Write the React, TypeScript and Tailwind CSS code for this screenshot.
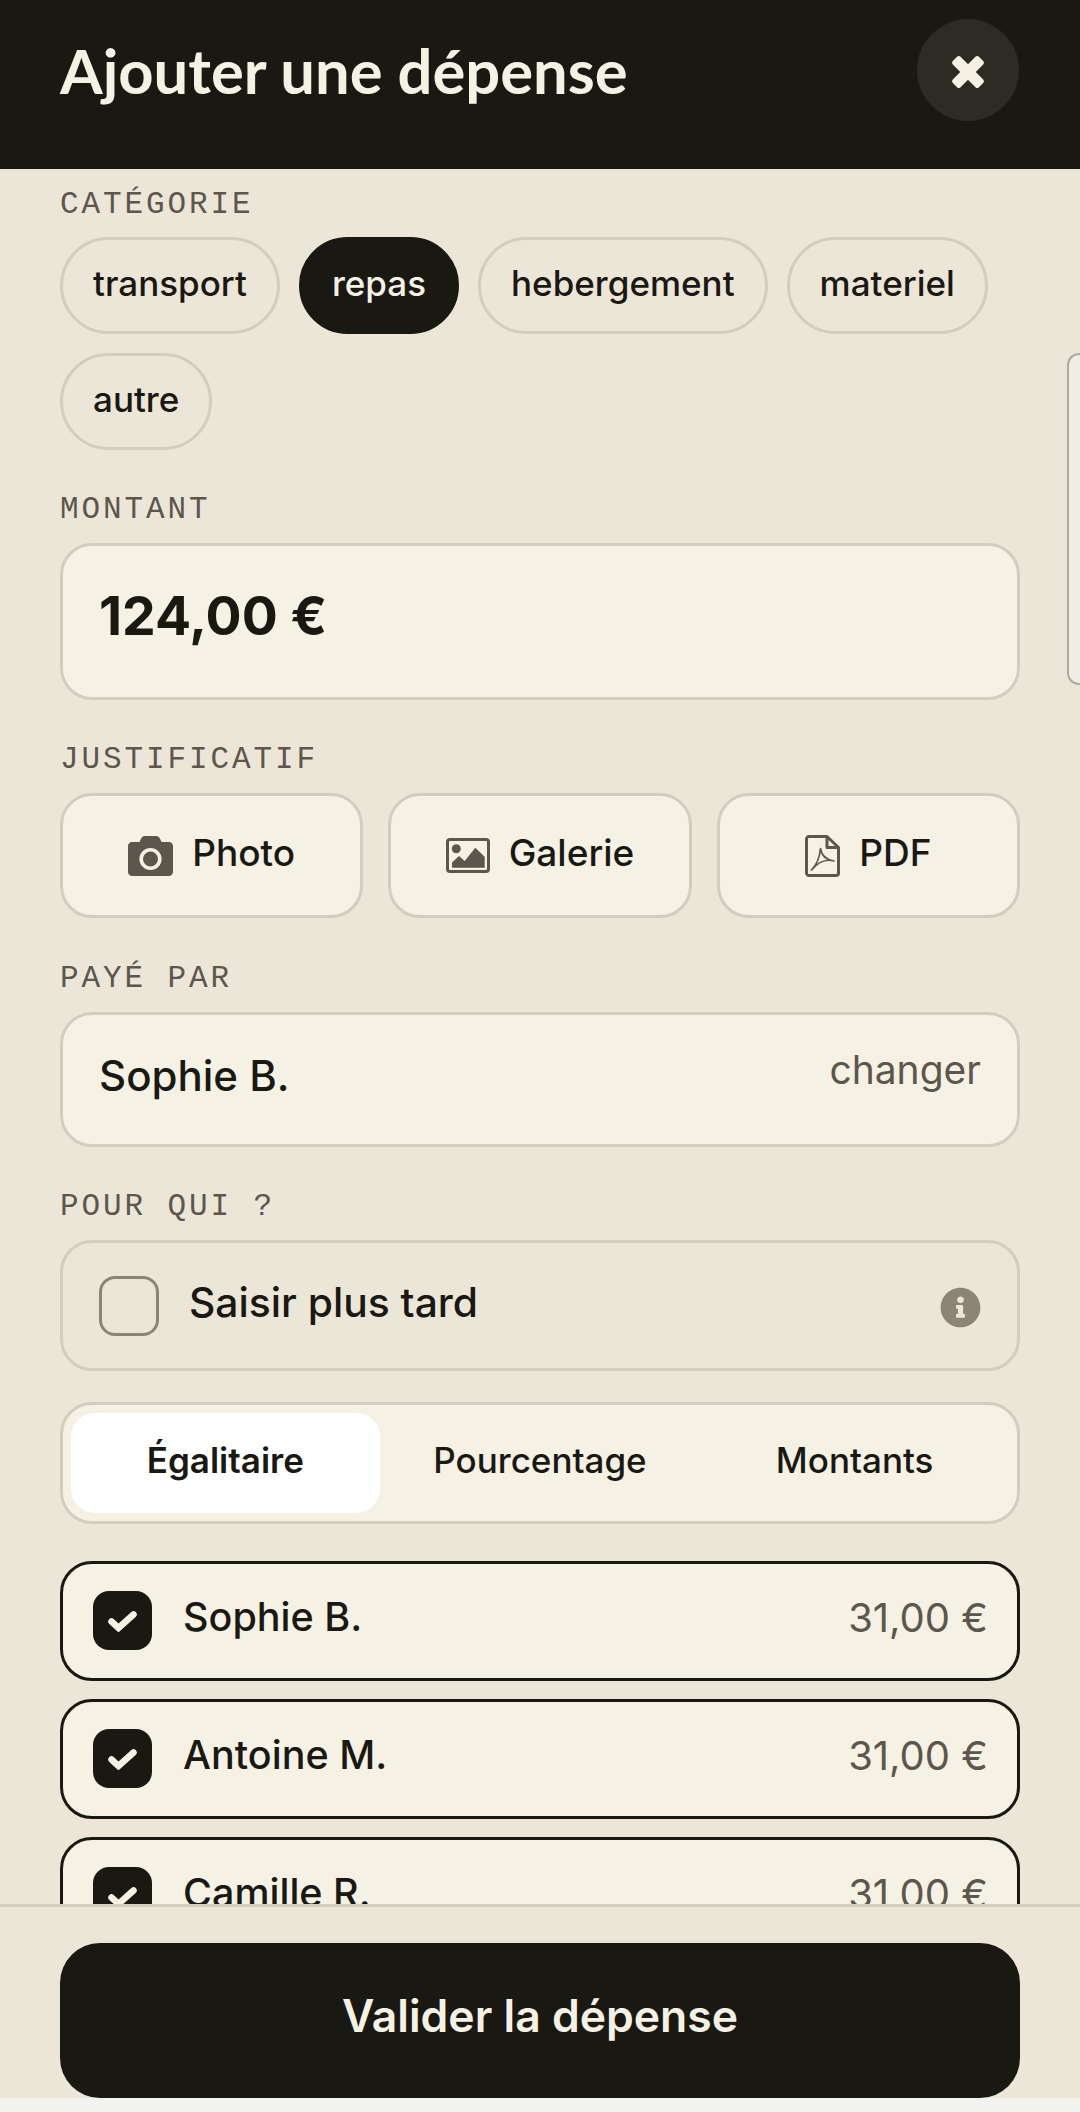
import React from "react";
import { FaInfoCircle } from "react-icons/fa";

const Label = ({ children, className = "" }: { children: React.ReactNode; className?: string }) => (
  <div className={`h-[44px] mb-[13px] pt-[3px] flex items-center whitespace-pre font-['Liberation_Mono',monospace] text-[31px] leading-[44px] tracking-[2.9px] text-[#5c564c] ${className}`}>
    {children}
  </div>
);

const chips = ["transport", "repas", "hebergement", "materiel", "autre"];
const people = ["Sophie B.", "Antoine M.", "Camille R."];

const CameraIcon = () => (
  <svg width="45" height="40" viewBox="0 0 45 40" className="block">
    <path d="M4 6h7.5l1.6-3.6C13.9 0.9 15 0 16.8 0h11.4c1.8 0 2.9 0.9 3.7 2.4L33.5 6H41c2.2 0 4 1.8 4 4v26c0 2.2-1.8 4-4 4H4c-2.2 0-4-1.8-4-4V10c0-2.2 1.8-4 4-4z" fill="#5c564c" />
    <circle cx="22.5" cy="23" r="9.3" fill="none" stroke="#f5f1e5" strokeWidth="3.6" />
  </svg>
);

const ImageIcon = () => (
  <svg width="44" height="35" viewBox="0 0 44 35" className="block">
    <rect x="1.5" y="1.5" width="41" height="32" rx="2.5" fill="none" stroke="#5c564c" strokeWidth="3" />
    <circle cx="10.3" cy="10.7" r="4.5" fill="#5c564c" />
    <path d="M6 29.7V24.5L13 18l5.7 5L29.3 9.7l9.4 9v11z" fill="#5c564c" />
  </svg>
);

const PdfIcon = () => (
  <svg width="35" height="42" viewBox="0 0 35 42" className="block" fill="none" stroke="#5c564c">
    <path d="M22 1.5H4A2.5 2.5 0 0 0 1.5 4v34A2.5 2.5 0 0 0 4 40.5h27a2.5 2.5 0 0 0 2.5-2.5V12.5z" strokeWidth="3" strokeLinejoin="round" />
    <path d="M22 1.5v11h11.5" strokeWidth="3" strokeLinejoin="round" />
    <path d="M6.5 35C10 31.5 14.5 24 15.5 13.5 16.5 20 21 25 29 26 22 24 14 26 6.5 35z" strokeWidth="1.7" strokeLinejoin="round" />
  </svg>
);

const CloseIcon = () => (
  <svg width="34" height="34" viewBox="0 0 34 34" className="block mt-[3px]" fill="#f5f1e5">
    <rect x="-1.5" y="11.5" width="37" height="11" rx="2.5" transform="rotate(45 17 17)" />
    <rect x="-1.5" y="11.5" width="37" height="11" rx="2.5" transform="rotate(-45 17 17)" />
  </svg>
);

const CheckIcon = () => (
  <svg width="29" height="21" viewBox="0 0 29 21" className="block mt-[1px]" fill="none" stroke="#f5f1e5" strokeWidth="6.5" strokeLinecap="round" strokeLinejoin="miter">
    <path d="M3.5 10.5l7 6.5L25.5 3.5" />
  </svg>
);

const Attach = ({ icon, text }: { icon: React.ReactNode; text: string }) => (
  <div className="flex-1 h-[125px] rounded-[32px] border-[3px] border-[#d4cdbf] bg-[#f5f1e5] flex items-center justify-center gap-[19px]">
    <span className="flex">{icon}</span>
    <span className="text-[37px] font-[450] text-[#1a1813] pb-[6px]">{text}</span>
  </div>
);

export default function App() {
  return (
    <div className="w-[1080px] h-[2112px] flex flex-col overflow-hidden bg-[#f2f2f0] relative font-['Inter',sans-serif]">
      <header className="h-[169px] shrink-0 bg-[#1a1813] flex items-start justify-between pl-[60px] pr-[61px] pt-[19px]">
        <h1 className="font-['Lato',sans-serif] font-bold text-[61.5px] leading-[102px] text-[#f5f1e5]">Ajouter une dépense</h1>
        <button className="w-[102px] h-[102px] rounded-full bg-[#2e2b24] flex items-center justify-center">
          <CloseIcon />
        </button>
      </header>

      <main className="h-[1735px] shrink-0 overflow-hidden bg-[#ece6d9] px-[60px] pt-[12px]">
        <Label>CATÉGORIE</Label>
        <div className="-mt-[1px] flex flex-wrap gap-[19px] w-[960px]">
          {chips.map((c) => (
            <div
              key={c}
              className={`h-[97px] rounded-[49px] border-[3px] px-[30px] flex items-center pb-[5px] text-[35px] font-[450] ${
                c === "repas" ? "bg-[#1a1813] border-[#1a1813] text-[#f5f1e5]" : "border-[#d4cdbf] text-[#1a1813]"
              }`}
            >
              {c}
            </div>
          ))}
        </div>

        <Label className="mt-[36px]">MONTANT</Label>
        <div className="h-[157px] rounded-[32px] border-[3px] border-[#d4cdbf] bg-[#f5f1e5] px-[36px] pt-[37px] text-[53.5px] leading-[66px] font-bold text-[#1a1813]">
          124,00 €
        </div>

        <Label className="mt-[36px]">JUSTIFICATIF</Label>
        <div className="flex gap-[25px]">
          <Attach icon={<CameraIcon />} text="Photo" />
          <Attach icon={<ImageIcon />} text="Galerie" />
          <Attach icon={<PdfIcon />} text="PDF" />
        </div>

        <Label className="mt-[37px]">PAYÉ PAR</Label>
        <div className="h-[135px] rounded-[32px] border-[3px] border-[#d4cdbf] bg-[#f5f1e5] px-[36px] flex items-center justify-between">
          <span className="text-[42px] font-medium text-[#1a1813] pb-[8px]">Sophie B.</span>
          <span className="text-[39px] text-[#5c564c] pb-[18px]">changer</span>
        </div>

        <Label className="mt-[36px]">POUR QUI ?</Label>
        <div className="h-[131px] rounded-[32px] border-[3px] border-[#d4cdbf] px-[36px] flex items-center">
          <span className="w-[60px] h-[60px] rounded-[16px] border-[3px] border-[#8c8577] shrink-0" />
          <span className="ml-[30px] text-[40.8px] font-medium text-[#1a1813] pb-[6px]">Saisir plus tard</span>
          <FaInfoCircle size={41} className="ml-auto mt-[3px] text-[#8c8577]" />
        </div>

        <div className="mt-[31px] h-[122px] rounded-[32px] border-[3px] border-[#d4cdbf] bg-[#f5f1e5] p-[8px] grid grid-cols-3 gap-[6px] items-stretch">
          {["Égalitaire", "Pourcentage", "Montants"].map((t, i) => (
            <div
              key={t}
              className={`rounded-[24px] flex items-center justify-center text-[35px] pb-[6px] text-[#1a1813] ${
                i === 0 ? "bg-white font-semibold" : "font-medium"
              }`}
            >
              {t}
            </div>
          ))}
        </div>

        <div className="mt-[37px] flex flex-col gap-[18px]">
          {people.map((p) => (
            <div key={p} className="h-[120px] shrink-0 rounded-[32px] border-[3px] border-[#1a1813] bg-[#f5f1e5] pl-[30px] pr-[29px] flex items-center">
              <span className="w-[59px] h-[59px] rounded-[16px] bg-[#1a1813] flex items-center justify-center shrink-0 -mt-[1px]">
                <CheckIcon />
              </span>
              <span className="ml-[31px] text-[39.5px] font-medium text-[#1a1813] pb-[6px]">{p}</span>
              <span className="ml-auto text-[40px] text-[#5c564c] pb-[6px]">31,00 €</span>
            </div>
          ))}
        </div>
      </main>

      <footer className="h-[194px] shrink-0 bg-[#ece6d9] border-t-[3px] border-[#d4cdbf] px-[60px] pt-[36px]">
        <button className="w-full h-[155px] rounded-[40px] bg-[#1a1813] text-[#f5f1e5] text-[44.5px] font-semibold pb-[8px]">
          Valider la dépense
        </button>
      </footer>

      <div className="absolute right-0 top-[353px] w-[13px] h-[332px] rounded-l-[12px] border-[2px] border-r-0 border-[#aeaa9f] bg-[#f0ede4]" />
    </div>
  );
}
